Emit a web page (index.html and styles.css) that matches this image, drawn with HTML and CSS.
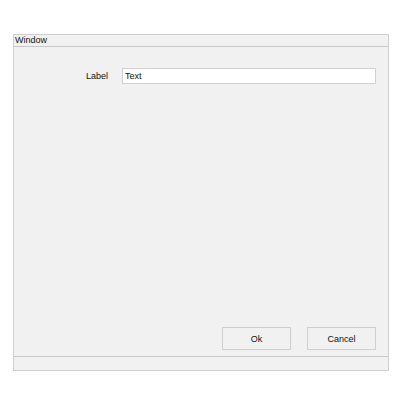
FILE: index.html
```html
<!DOCTYPE html>
<html>
<head>
<meta charset="utf-8">
<link rel="stylesheet" href="styles.css">
</head>
<body>
<div class="window">
  <div class="titlebar">Window</div>
  <div class="content">
    <div class="row">
      <span class="label">Label</span>
      <div class="input">Text</div>
    </div>
    <div class="spacer"></div>
    <div class="buttons">
      <div class="btn">Ok</div>
      <div class="btn">Cancel</div>
    </div>
  </div>
  <div class="statusbar"></div>
</div>
</body>
</html>
```
FILE: styles.css
```css
html, body {
  margin: 0;
  padding: 0;
  background: #ffffff;
}
body {
  padding: 34px 0 0 13px;
  font-family: "Liberation Sans", Arial, sans-serif;
  font-size: 9px;
  color: #111;
}
.window {
  width: 376px;
  height: 337px;
  box-sizing: border-box;
  border: 1px solid #cfcfcf;
  background: #f1f1f1;
  display: flex;
  flex-direction: column;
}
.titlebar {
  height: 11px;
  line-height: 11px;
  padding-left: 1px;
  border-bottom: 1px solid #c8c8c8;
}
.content {
  flex: 1;
  display: flex;
  flex-direction: column;
  padding: 21px 12px 6px 12px;
}
.row {
  display: flex;
  align-items: center;
  justify-content: flex-end;
}
.label {
  margin-right: 14px;
}
.input {
  width: 254px;
  height: 16px;
  box-sizing: border-box;
  background: #ffffff;
  border: 1px solid #d2d2d2;
  line-height: 14px;
  padding-left: 2px;
}
.spacer {
  flex: 1;
}
.buttons {
  display: flex;
  justify-content: flex-end;
  gap: 16px;
}
.btn {
  width: 69px;
  height: 23px;
  box-sizing: border-box;
  border: 1px solid #cfcfcf;
  background: #f1f1f1;
  display: flex;
  align-items: center;
  justify-content: center;
}
.statusbar {
  height: 13px;
  border-top: 1px solid #c8c8c8;
}
```
